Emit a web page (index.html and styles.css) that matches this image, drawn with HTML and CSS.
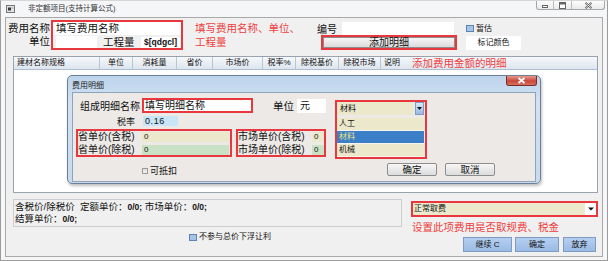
FILE: index.html
```html
<!DOCTYPE html>
<html>
<head>
<meta charset="utf-8">
<title>非定额项目(支持计算公式)</title>
<link rel="stylesheet" href="styles.css">
</head>
<body>
<div class="window">
	<div class="titlebar">
		<svg class="appicon" width="9" height="8" viewBox="0 0 9 8"><rect x="0.5" y="0.5" width="8" height="7" fill="#e4e4e4" stroke="#777"/><rect x="2" y="2.5" width="3" height="3" fill="#3a3a3a"/><rect x="5.5" y="2.5" width="2" height="1" fill="#999"/></svg>
		<span class="wintitle">非定额项目(支持计算公式)</span>
		<div class="ctrls">
			<span class="cbtn cmin"><svg width="8" height="6" viewBox="0 0 8 6"><rect x="1.5" y="3.5" width="5" height="2" fill="#fff" stroke="#666"/></svg></span>
			<span class="cbtn cmax"><svg width="9" height="7" viewBox="0 0 9 7"><rect x="1.5" y="0.5" width="6" height="6" fill="#fff" stroke="#666"/><rect x="1.5" y="0.5" width="6" height="2" fill="#666"/></svg></span>
			<span class="cbtn cclose"><svg width="9" height="7" viewBox="0 0 9 7"><path d="M1.5 0.8 L7.5 6.2 M7.5 0.8 L1.5 6.2" stroke="#666" stroke-width="2"/><path d="M1.5 0.8 L7.5 6.2 M7.5 0.8 L1.5 6.2" stroke="#fff" stroke-width="0.7"/></svg></span>
		</div>
	</div>
	<div class="client">
		<div class="top">
			<div class="labels">
				<div class="lab lrow">费用名称</div>
				<div class="lab lrow">单位</div>
			</div>
			<div class="redgroup">
				<div class="field f-name">填写费用名称</div>
				<div class="row2">
					<div class="field f-unit"></div>
					<span class="lab lab-qty">工程量</span>
					<div class="field f-qty">$[qdgcl]</div>
				</div>
			</div>
			<div class="note note-top">填写费用名称、单位、<br>工程量</div>
			<div class="midcol">
				<div class="mrow"><span class="lab lab-code">编号</span><div class="field f-code"></div></div>
				<div class="redbtn"><div class="btn btn-add">添加明细</div></div>
			</div>
			<div class="rightcol">
				<div class="chkrow"><span class="chk chk-blue"></span><span class="small">暂估</span></div>
				<div class="markcolor">标记颜色</div>
			</div>
		</div>

		<div class="grid">
			<div class="ghead">
				<span class="gc c1">建材名称规格</span>
				<span class="gc c2">单位</span>
				<span class="gc c3">消耗量</span>
				<span class="gc c4">省价</span>
				<span class="gc c5">市场价</span>
				<span class="gc c6">税率%</span>
				<span class="gc c7">除税基价</span>
				<span class="gc c8">除税市场</span>
				<span class="gc c9">说明</span>
				<span class="gc cnote">添加费用金额的明细</span>
			</div>
			<div class="gbody"></div>
		</div>

		<div class="bottom">
			<div class="bleft">
				<div class="sumpanel">
					<div>含税价/除税价&nbsp; 定额单价：<b>0/0;</b> 市场单价：<b>0/0;</b></div>
					<div>结算单价：<b>0/0;</b></div>
				</div>
				<div class="chkrow chk-float"><span class="chk chk-blue"></span><span class="small">不参与总价下浮让利</span></div>
			</div>
			<div class="bright">
				<div class="redcombo">
					<div class="combo-field">正常取费</div>
					<div class="combo-arrow"><svg width="6" height="4" viewBox="0 0 6 4"><path d="M0 0.5 H6 L3 3.5 Z" fill="#111"/></svg></div>
				</div>
				<div class="note note-fee">设置此项费用是否取规费、税金</div>
				<div class="actions">
					<div class="abtn a-cont">继续 C</div>
					<div class="abtn a-ok">确定</div>
					<div class="abtn a-quit">放弃</div>
				</div>
			</div>
		</div>
	</div>

	<!-- popup dialog over the grid -->
	<div class="dialog">
		<div class="dtitle">
			<span>费用明细</span>
			<span class="dclose"><svg width="9" height="7" viewBox="0 0 9 7"><path d="M1.5 1 L7.5 6 M7.5 1 L1.5 6" stroke="#fff" stroke-width="1.7"/></svg></span>
		</div>
		<div class="dbody">
			<div class="dleft">
				<div class="drow drow-a">
					<span class="dlab">组成明细名称</span>
					<div class="dfield dname">填写明细名称</div>
					<span class="dlab2">单位</span>
					<div class="dfield dunit">元</div>
				</div>
				<div class="drow drow-b">
					<span class="dlab dlab-rate">税率</span>
					<div class="dfield drate">0.16</div>
				</div>
				<div class="drow drow-c">
					<div class="redbox rb1">
						<div class="prow"><span class="plab">省单价(含税)</span><div class="pin khaki">0</div></div>
						<div class="prow"><span class="plab">省单价(除税)</span><div class="pin green">0</div></div>
					</div>
					<div class="redbox rb2">
						<div class="prow"><span class="plab">市场单价(含税)</span><div class="pin khaki">0</div></div>
						<div class="prow"><span class="plab">市场单价(除税)</span><div class="pin green">0</div></div>
					</div>
				</div>
				<div class="drow drow-d"><span class="chk chk-grey"></span><span class="dchk-text">可抵扣</span></div>
			</div>
			<div class="dright">
				<div class="redbox rcombo">
					<div class="dcombo">
						<div class="dcfield">材料</div>
						<div class="dcarrow"><svg width="5" height="3" viewBox="0 0 5 3"><path d="M0 0 H5 L2.5 3 Z" fill="#111"/></svg></div>
					</div>
					<div class="dlist">
						<div class="ditem">人工</div>
						<div class="ditem sel">材料</div>
						<div class="ditem">机械</div>
					</div>
				</div>
				<div class="dbtns">
					<div class="btn dbtn">确定</div>
					<div class="btn dbtn">取消</div>
				</div>
			</div>
		</div>
	</div>
</div>
</body>
</html>
```

FILE: styles.css
```css
body{
	margin: 0;
	font-family: "Liberation Sans", "Noto Sans CJK SC", sans-serif;
	color: #111;
}

/* outer window */
.window{
	position: relative;
	width: 608px;
	height: 261px;
	box-sizing: border-box;
	border: 1px solid #9c9c9c;
	border-top-color: #d6d6d6;
	background: #f5f6f8;
	display: flex;
	flex-direction: column;
}
.titlebar{
	height: 16px;
	flex: none;
	display: flex;
	align-items: center;
}
.appicon{
	margin-left: 5px;
}
.wintitle{
	margin-left: 13px;
	font-size: 7.5px;
	line-height: 16px;
	color: #333;
}
.ctrls{
	margin-left: auto;
	margin-right: 2px;
	align-self: flex-start;
	display: flex;
	height: 8px;
	border: 1px solid #a8a8a8;
	border-top: none;
	border-radius: 0 0 3px 3px;
	background: linear-gradient(#fdfdfd, #eaeaea);
}
.cbtn{
	display: flex;
	align-items: center;
	justify-content: center;
}
.cmin{
	width: 16px;
	border-right: 1px solid #bcbcbc;
}
.cmax{
	width: 17px;
	border-right: 1px solid #bcbcbc;
}
.cclose{
	width: 32px;
}

.client{
	flex: 1;
	min-height: 0;
	margin: 0 4px 3px 4px;
	border: 1px solid #a9a9a9;
	background: #f0f0f0;
}

/* top form */
.top{
	display: flex;
	height: 32px;
	box-sizing: border-box;
	padding-top: 2px;
}
.lab{
	font-size: 10.5px;
	white-space: nowrap;
}
.labels{
	width: 44px;
	padding-top: 2px;
	text-align: right;
}
.lrow{
	line-height: 13px;
}
.field{
	background: #fff;
	box-sizing: border-box;
}
.redgroup{
	margin-left: 1px;
	width: 132px;
	height: 30px;
	box-sizing: border-box;
	border: 2px solid #e8373d;
}
.f-name{
	height: 13px;
	padding-left: 3px;
	font-size: 10.5px;
	line-height: 13px;
}
.row2{
	display: flex;
	align-items: center;
	margin-top: 1px;
	height: 12px;
}
.f-unit{
	margin-left: 3px;
	width: 41px;
	height: 12px;
}
.lab-qty{
	margin-left: 6px;
	width: 32px;
	line-height: 12px;
}
.f-qty{
	margin-left: 6px;
	width: 39px;
	height: 11px;
	padding-left: 3px;
	font-weight: bold;
	font-size: 8.5px;
	line-height: 11px;
}
.note{
	color: #ee3e3e;
	font-size: 10.5px;
	line-height: 14px;
	white-space: nowrap;
}
.note-top{
	margin-left: 12px;
	width: 121px;
	padding-top: 1px;
}
.midcol{
	width: 142px;
	padding-top: 2px;
}
.mrow{
	display: flex;
	align-items: center;
	height: 13px;
}
.lab-code{
	margin-left: 1px;
	font-size: 10px;
}
.f-code{
	margin-left: 5px;
	width: 112px;
	height: 13px;
}
.redbtn{
	margin-left: 5px;
	width: 136px;
	height: 15px;
	box-sizing: border-box;
	border: 2px solid #e8373d;
}
.btn{
	box-sizing: border-box;
	border: 1px solid #8d8d8d;
	background: linear-gradient(#f6f6f6, #dcdcdc);
	text-align: center;
}
.btn-add{
	height: 11px;
	font-size: 10px;
	line-height: 9px;
}
.rightcol{
	margin-left: 8px;
	padding-top: 2px;
}
.chkrow{
	display: flex;
	align-items: center;
	height: 13px;
}
.chk{
	display: block;
	box-sizing: border-box;
	flex: none;
}
.chk-blue{
	width: 8px;
	height: 7px;
	border: 1px solid #5b84b9;
	background: #a6c4e8;
}
.small{
	margin-left: 2px;
	font-size: 8px;
	line-height: 10px;
}
.markcolor{
	margin-top: 1px;
	width: 55px;
	height: 14px;
	background: #fff;
	font-size: 8px;
	line-height: 14px;
	text-align: center;
}

/* detail grid */
.grid{
	margin: 6px 0 0 7px;
	width: 585px;
	height: 137px;
	box-sizing: border-box;
	border: 1px solid #9aa3ad;
	background: #fff;
	display: flex;
	flex-direction: column;
}
.ghead{
	flex: none;
	height: 13px;
	box-sizing: border-box;
	display: flex;
	background: linear-gradient(#f6f8fb, #dde5ee);
	border-bottom: 1px solid #aebdd0;
	font-size: 8px;
	line-height: 12px;
}
.gc{
	flex: none;
	box-sizing: border-box;
	border-right: 1px solid #bcc6d2;
	text-align: center;
	white-space: nowrap;
}
.c1{ width: 86px; text-align: left; padding-left: 3px; }
.c2{ width: 33px; }
.c3{ width: 44px; }
.c4{ width: 36px; }
.c5{ width: 50px; }
.c6{ width: 33px; }
.c7{ width: 43px; }
.c8{ width: 42px; }
.c9{ width: 24px; border-right: none; text-align: left; padding-left: 3px; }
.cnote{
	flex: 1;
	border-right: none;
	text-align: left;
	padding-left: 7px;
	color: #ee3e3e;
	font-size: 10.5px;
}
.gbody{
	flex: 1;
}

/* bottom area */
.bottom{
	display: flex;
	margin-top: 6px;
}
.bleft{
	margin-left: 7px;
	width: 389px;
}
.sumpanel{
	height: 28px;
	box-sizing: border-box;
	border: 1px solid #cdcdcd;
	padding: 0.5px 0 0 1px;
	font-size: 9.5px;
	line-height: 11px;
	white-space: nowrap;
}
.sumpanel b{
	font-size: 8.5px;
}
.chk-float{
	margin-top: 6px;
	margin-left: 176px;
	height: 8px;
}
.bright{
	margin-left: 9px;
	width: 187px;
}
.redcombo{
	margin-top: 2px;
	height: 16px;
	box-sizing: border-box;
	border: 2px solid #e8373d;
	display: flex;
}
.combo-field{
	flex: 1;
	background: #ece9cc;
	font-size: 8px;
	line-height: 12px;
	padding-left: 1px;
}
.combo-arrow{
	width: 11px;
	background: #fff;
	display: flex;
	align-items: center;
	justify-content: center;
}
.note-fee{
	margin-top: 3px;
	margin-left: 1px;
}
.actions{
	margin-top: 3px;
	display: flex;
}
.abtn{
	height: 15px;
	box-sizing: border-box;
	border: 1px solid #7e9cc0;
	background: linear-gradient(#b4cef0, #9bbbe4);
	font-size: 8px;
	line-height: 13px;
	text-align: center;
}
.a-cont{ margin-left: 52px; width: 49px; }
.a-ok{ margin-left: 3px; width: 44px; }
.a-quit{ margin-left: 4px; width: 33px; }

/* popup dialog */
.dialog{
	position: absolute;
	left: 66px;
	top: 74px;
	width: 474px;
	height: 109px;
	box-sizing: border-box;
	border: 1px solid #6d7f95;
	border-radius: 5px;
	background: linear-gradient(#bcd4ec, #d2e2f3 25%, #c7daee);
	box-shadow: 1px 2px 3px rgba(0,0,0,.25);
	display: flex;
	flex-direction: column;
}
.dtitle{
	flex: none;
	height: 16px;
	display: flex;
	align-items: center;
	padding-left: 4px;
	font-size: 8px;
	color: #222;
}
.dclose{
	margin-left: auto;
	margin-right: 3px;
	align-self: flex-start;
	width: 31px;
	height: 10px;
	box-sizing: border-box;
	border: 1px solid #7a2d28;
	border-top: none;
	border-radius: 0 0 3px 3px;
	background: linear-gradient(#e59a8c, #c9473a 55%, #d8705f);
	display: flex;
	align-items: center;
	justify-content: center;
}
.dbody{
	flex: 1;
	margin: 0 4px 1px 4px;
	border: 1px solid #8fa3ba;
	background: #ece9e7;
	display: flex;
}
.dleft{
	width: 253px;
}
.drow{
	display: flex;
	align-items: center;
}
.dlab{
	width: 67px;
	flex: none;
	text-align: right;
	font-size: 10px;
	white-space: nowrap;
}
.dfield{
	box-sizing: border-box;
	background: #fff;
}
.drow-a{
	margin-top: 5px;
	height: 15px;
}
.dname{
	margin-left: 2px;
	width: 111px;
	height: 15px;
	border: 2px solid #e8373d;
	padding-left: 1px;
	font-size: 10px;
	line-height: 11px;
}
.dlab2{
	margin-left: 20px;
	font-size: 10.5px;
}
.dunit{
	margin-left: 3px;
	width: 29px;
	height: 14px;
	padding-left: 3px;
	font-size: 10px;
	line-height: 14px;
}
.drow-b{
	margin-top: 3px;
	height: 10px;
}
.dlab-rate{
	padding-right: 5px;
	box-sizing: border-box;
	font-size: 9px;
}
.drate{
	margin-left: 3px;
	width: 35px;
	height: 10px;
	background: #c8e6f8;
	padding-left: 2px;
	font-size: 9px;
	line-height: 10px;
	letter-spacing: 0.6px;
}
.drow-c{
	margin-top: 3px;
	height: 28px;
	align-items: stretch;
}
.redbox{
	box-sizing: border-box;
	border: 2px solid #e8373d;
}
.rb1{
	margin-left: 3px;
	width: 156px;
}
.rb2{
	margin-left: 4px;
	width: 90px;
}
.prow{
	display: flex;
	align-items: center;
	height: 11px;
}
.prow + .prow{
	margin-top: 2px;
}
.plab{
	flex: none;
	font-size: 10px;
	line-height: 11px;
	white-space: nowrap;
}
.rb1 .plab{ width: 64px; }
.rb2 .plab{ width: 74px; }
.pin{
	height: 10px;
	padding-left: 2px;
	box-sizing: border-box;
	font-size: 8px;
	line-height: 10px;
}
.rb1 .pin{ width: 87px; }
.rb2 .pin{ width: 12px; }
.khaki{ background: #ebe8cb; }
.green{ background: #c9e2c5; }
.drow-d{
	margin-top: 9px;
	height: 9px;
}
.chk-grey{
	margin-left: 69px;
	width: 6px;
	height: 6px;
	border: 1px solid #9a9a9a;
	background: linear-gradient(#dcdcdc, #f4f4f4);
}
.dchk-text{
	margin-left: 2px;
	font-size: 9px;
}
.dright{
	flex: 1;
}
.rcombo{
	margin: 7px 0 0 9px;
	width: 92px;
}
.dcombo{
	display: flex;
	height: 13px;
}
.dcfield{
	width: 76px;
	background: #ebe8cb;
	padding-left: 3px;
	box-sizing: border-box;
	font-size: 8px;
	line-height: 13px;
}
.dcarrow{
	margin-left: 2px;
	width: 9px;
	box-sizing: border-box;
	border: 1px solid #7f9dc4;
	background: linear-gradient(#dbe8f7, #98b8e2);
	display: flex;
	align-items: center;
	justify-content: center;
}
.dlist{
	margin-top: 3px;
	width: 87px;
}
.ditem{
	height: 13px;
	box-sizing: border-box;
	border-bottom: 1px solid #f7f6ec;
	background: #ebe8cb;
	padding-left: 2px;
	font-size: 8px;
	line-height: 12px;
}
.ditem.sel{
	background: #3c7fc9;
	color: #e4e07a;
}
.dbtns{
	display: flex;
	margin: 4px 0 0 61px;
}
.dbtn{
	width: 50px;
	height: 13px;
	border-radius: 2px;
	font-size: 9.5px;
	line-height: 11px;
}
.dbtn + .dbtn{
	margin-left: 8px;
}
```
